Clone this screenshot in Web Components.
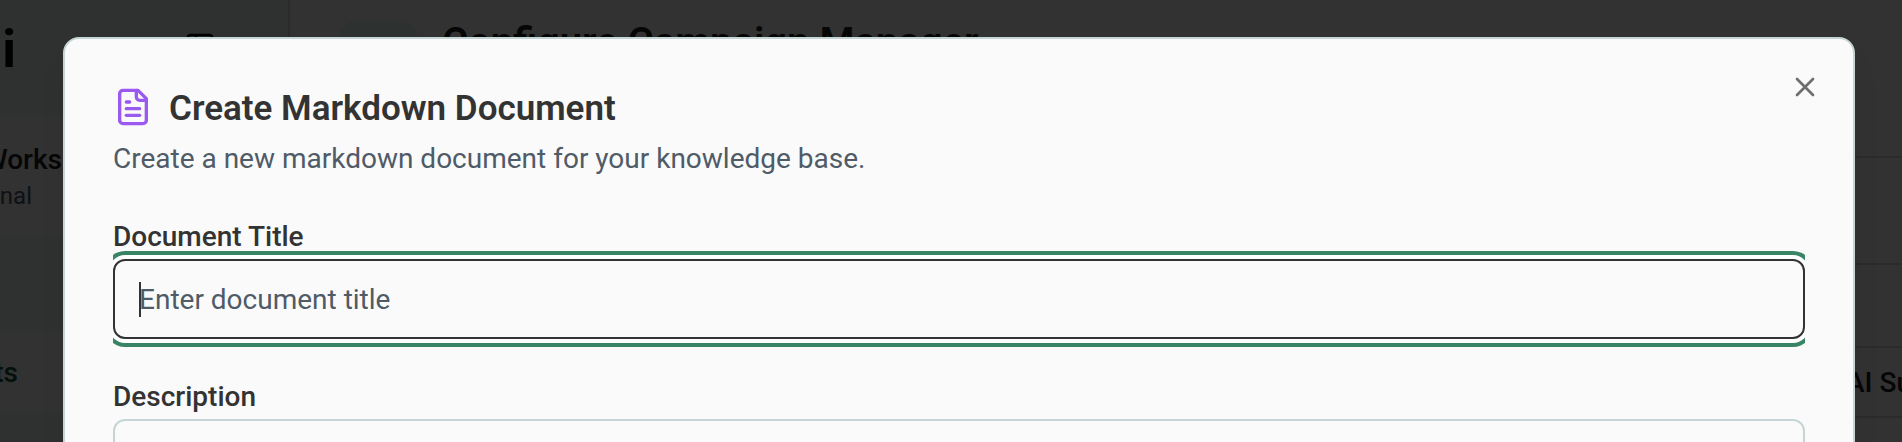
<!DOCTYPE html>
<html lang="en">
<head>
<meta charset="utf-8">
<title>Create Markdown Document</title>
<style>
  html, body { margin: 0; height: 100%; overflow: hidden; }
  body { font-family: Roboto, "Liberation Sans", sans-serif; font-size: 28px; color: #333333; background: #fafafa; }
</style>
</head>
<body>
<app-page>
  <app-sidebar slot="sidebar"></app-sidebar>
  <app-main slot="main"></app-main>
</app-page>
<modal-layer>
  <document-dialog>
    <span slot="title">Create Markdown Document</span>
    <span slot="description">Create a new markdown document for your knowledge base.</span>
    <text-field label="Document Title" placeholder="Enter document title" active></text-field>
    <text-field label="Description"></text-field>
  </document-dialog>
</modal-layer>

<script>
const define = (name, html, setup) => customElements.define(name, class extends HTMLElement {
  constructor() {
    super();
    this.attachShadow({ mode: 'open' }).innerHTML = html;
  }
  connectedCallback() { if (setup) setup(this, this.shadowRoot); }
});

define('app-page', `
  <style>
    :host { display: flex; height: 100vh; overflow: hidden; }
    ::slotted([slot=main]) { flex: 1; min-width: 0; }
  </style>
  <slot name="sidebar"></slot><slot name="main"></slot>`);

define('app-sidebar', `
  <style>
    :host { display: flex; flex-direction: column; flex: none; width: 288px; background: #eaf4ef; border-right: 2px solid #d2dbd7; color: #202020; }
    .brand { display: flex; height: 116px; }
    .tail { display: flex; flex-direction: column; justify-content: center; align-items: flex-end; width: 62px; box-sizing: border-box; }
    .logo { width: 16px; height: 100px; color: #000; font-size: 52px; font-weight: 700; line-height: 100px; }
    .toggle { margin: 31px 0 0 168px; width: 32px; height: 32px; padding: 0; border: 0; background: none; color: #000; }
    .toggle svg { display: block; }
    .band { display: flex; background: #fafafa; }
    .workspace { height: 120px; font-weight: 500; line-height: 40px; }
    small { margin-right: 30px; color: #4b5563; font-size: 24px; font-weight: 400; line-height: 32px; }
    .item { height: 80px; margin-top: 96px; }
    a { margin-right: 44px; color: #14523a; font-weight: 500; text-decoration: none; }
  </style>
  <div class="brand">
    <div class="tail logo">i</div>
    <button class="toggle" aria-label="Toggle sidebar"><svg width="32" height="32" viewBox="0 0 24 24" fill="none" stroke="currentColor" stroke-width="2"><rect x="3" y="3" width="18" height="18" rx="2"/><path d="M9 3v18"/></svg></button>
  </div>
  <div class="band workspace"><div class="tail"><span>Works</span><small>nal</small></div></div>
  <nav class="band item"><div class="tail"><a href="#">ts</a></div></nav>`);

define('app-main', `
  <style>
    :host { display: block; background: #fafafa; color: #202020; }
    header { display: flex; gap: 24px; height: 136px; padding: 20px 0 0 48px; border-bottom: 2px solid #d0d4d3; }
    .tile { width: 80px; height: 80px; border-radius: 20px; background: #e2f2e8; }
    h1 { margin: 0; font-size: 40px; font-weight: 600; line-height: 46px; color: #202020; }
    .row { display: flex; align-items: center; justify-content: flex-end; box-sizing: border-box; border-bottom: 2px solid #d0d4d3; font-weight: 500; }
    .tall { height: 107px; } .mid { height: 83px; } .short { height: 70px; }
    .row span { width: 56px; white-space: nowrap; }
  </style>
  <header><div class="tile"></div><h1>Configure Campaign Manager</h1></header>
  <div class="row tall"></div>
  <div class="row mid"></div>
  <div class="row short"><span>AI Su</span></div>`);

define('modal-layer', `
  <style>
    :host { position: absolute; inset: 0; display: block; overflow: hidden; padding: 37px 47px 0 63px; background: rgba(0, 0, 0, .8); }
  </style>
  <slot></slot>`);

define('document-dialog', `
  <style>
    :host { display: block; }
    section { position: relative; min-height: 100vh; box-sizing: border-box; padding: 48px; border: 2px solid #c5d5d5; border-radius: 16px; background: #fafafa; box-shadow: 0 20px 30px -6px rgba(0, 0, 0, .1); }
    .heading { display: flex; align-items: flex-end; gap: 16px; }
    .heading svg { flex: none; color: #9b59f0; }
    h2 { margin: 0; font-size: 35px; font-weight: 600; line-height: 36px; }
    p { margin: 12px 0 44px; color: #4f5b67; line-height: 40px; }
    form { display: flex; flex-direction: column; gap: 44px; overflow-x: clip; }
    .close { position: absolute; top: 32px; right: 32px; width: 32px; height: 32px; padding: 0; border: 0; background: none; color: #6e6e6e; }
    .close svg { display: block; }
  </style>
  <section role="dialog" aria-labelledby="title">
    <div class="heading">
      <svg width="40" height="40" viewBox="0 0 24 24" fill="none" stroke="currentColor" stroke-width="2" stroke-linecap="round" stroke-linejoin="round"><path d="M15 2H6a2 2 0 0 0-2 2v16a2 2 0 0 0 2 2h12a2 2 0 0 0 2-2V7Z"/><path d="M14 2v4a2 2 0 0 0 2 2h4"/><path d="M10 9H8"/><path d="M16 13H8"/><path d="M16 17H8"/></svg>
      <h2 id="title"><slot name="title"></slot></h2>
    </div>
    <p><slot name="description"></slot></p>
    <form><slot></slot></form>
    <button class="close" aria-label="Close"><svg width="32" height="32" viewBox="0 0 24 24" fill="none" stroke="currentColor" stroke-width="2" stroke-linecap="round"><path d="M18 6 6 18M6 6l12 12"/></svg></button>
  </section>`);

define('text-field', `
  <style>
    :host { display: flex; flex-direction: column; gap: 8px; }
    label { font-weight: 500; line-height: 28px; }
    .box { position: relative; display: flex; }
    input { flex: 1; min-width: 0; height: 80px; box-sizing: border-box; padding: 0 24px; border: 2px solid #c5d5d5; border-radius: 12px; outline: 0; background: #fafafa; color: #333; font: inherit; caret-color: transparent; }
    input::placeholder { color: #4f5b67; opacity: 1; }
    :host([active]) input { border-color: #333; box-shadow: 0 0 0 4px #fff, 0 0 0 8px #388465; }
    .caret { display: none; position: absolute; left: 26px; top: 23px; width: 2px; height: 35px; background: #333; }
    :host([active]) .caret { display: block; }
  </style>
  <label for="field"></label>
  <div class="box"><input id="field" type="text"><span class="caret"></span></div>`,
  (host, root) => {
    root.querySelector('label').textContent = host.getAttribute('label');
    root.querySelector('input').placeholder = host.getAttribute('placeholder') || '';
  });
</script>
</body>
</html>
